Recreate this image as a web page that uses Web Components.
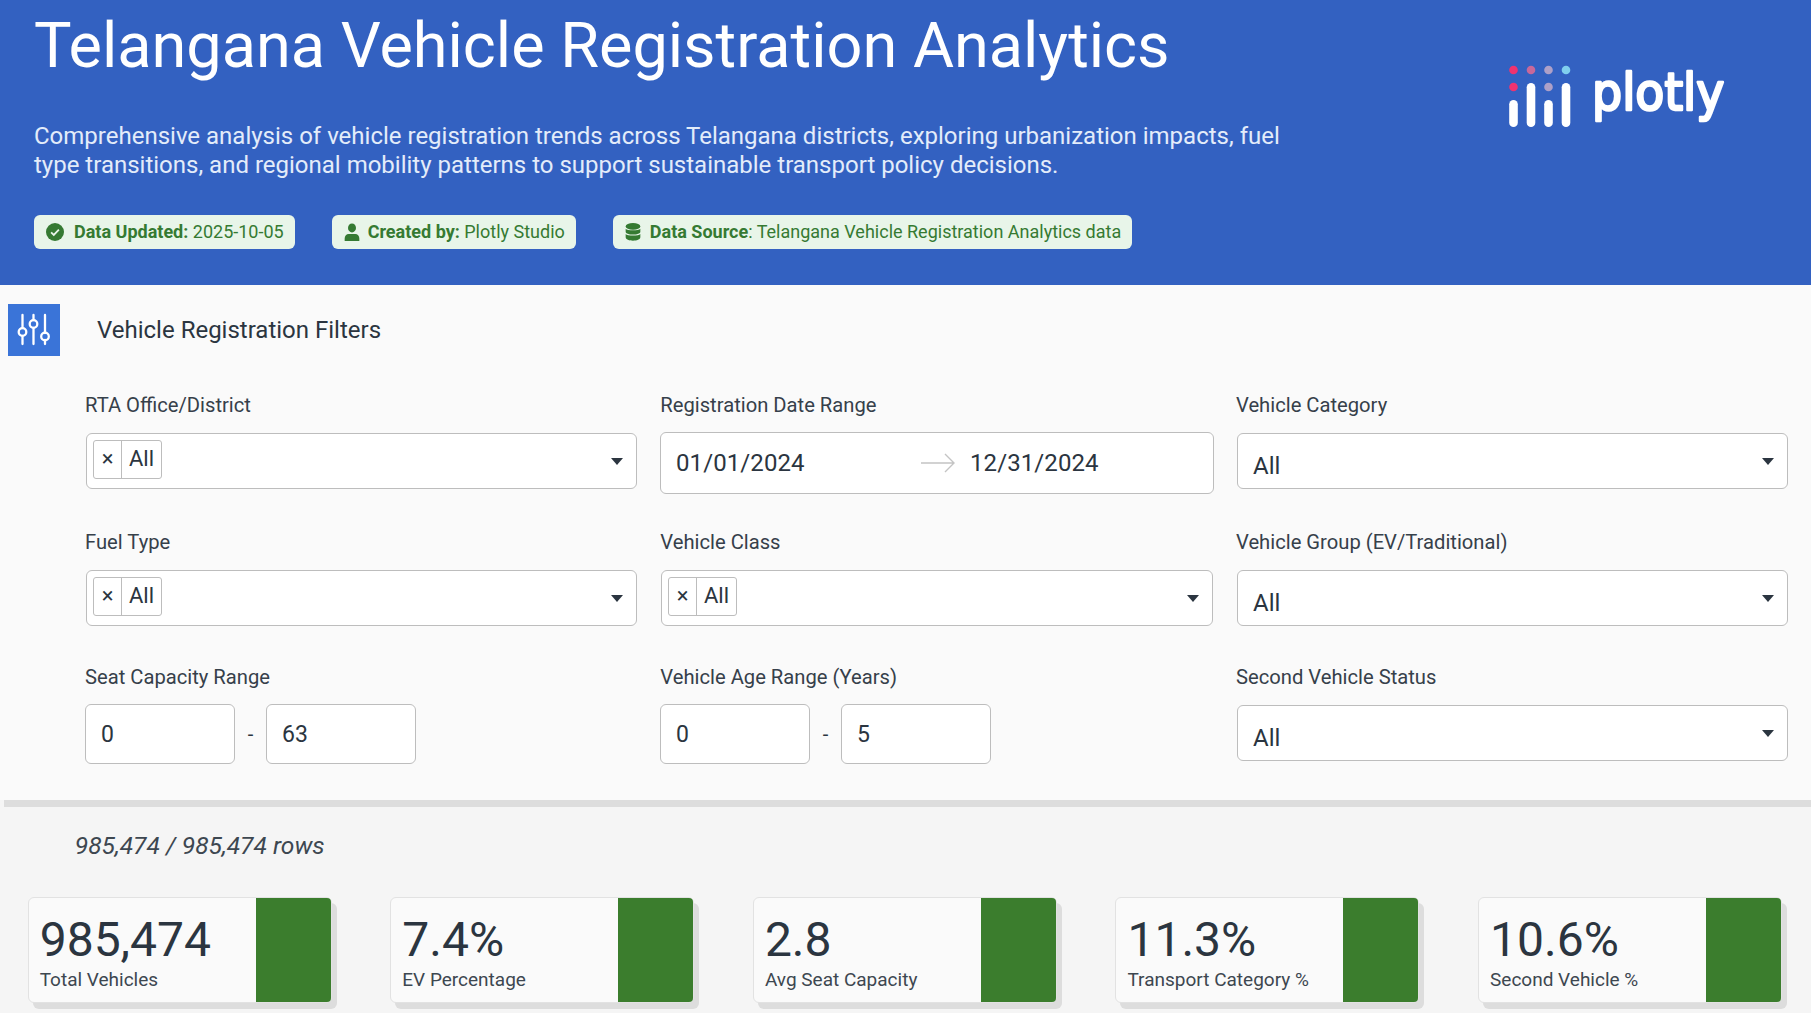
<!DOCTYPE html>
<html lang="en">
<head>
<meta charset="utf-8">
<title>Telangana Vehicle Registration Analytics</title>
<style>
  html, body { margin: 0; height: 100%; overflow: hidden; background: #f5f5f5; }
  body { font-family: Roboto, "Liberation Sans", sans-serif; color: #2b3540; }
</style>
</head>
<body>

<app-header>
  <status-badge icon="check"><b>Data Updated:</b> 2025-10-05</status-badge>
  <status-badge icon="user"><b>Created by:</b> Plotly Studio</status-badge>
  <status-badge icon="database"><b>Data Source</b>: Telangana Vehicle Registration Analytics data</status-badge>
</app-header>

<filter-panel>
  <filter-field label="RTA Office/District"><multi-select></multi-select></filter-field>
  <filter-field label="Registration Date Range"><date-range start="01/01/2024" end="12/31/2024"></date-range></filter-field>
  <filter-field label="Vehicle Category" class="c3"><single-select></single-select></filter-field>
  <filter-field label="Fuel Type"><multi-select></multi-select></filter-field>
  <filter-field label="Vehicle Class" class="c2"><multi-select></multi-select></filter-field>
  <filter-field label="Vehicle Group (EV/Traditional)" class="c3"><single-select></single-select></filter-field>
  <filter-field label="Seat Capacity Range"><number-range min="0" max="63"></number-range></filter-field>
  <filter-field label="Vehicle Age Range (Years)"><number-range min="0" max="5"></number-range></filter-field>
  <filter-field label="Second Vehicle Status" class="c3"><single-select></single-select></filter-field>
</filter-panel>

<kpi-section>
  <span slot="count">985,474 / 985,474 rows</span>
  <kpi-card value="985,474" label="Total Vehicles"></kpi-card>
  <kpi-card value="7.4%" label="EV Percentage"></kpi-card>
  <kpi-card value="2.8" label="Avg Seat Capacity"></kpi-card>
  <kpi-card value="11.3%" label="Transport Category %"></kpi-card>
  <kpi-card value="10.6%" label="Second Vehicle %"></kpi-card>
</kpi-section>

<script>
  const ICONS = {
    check: `<svg viewBox="0 0 24 24" width="18" height="18" style="margin-right:1px"><circle cx="12" cy="12" r="12" fill="currentColor"/><path d="M6.800 12.400l3.600 3.500 6.800-7" fill="none" stroke="#e8f5e9" stroke-width="2.400"/></svg>`,
    user: `<svg viewBox="0 0 24 24" width="16" height="18" preserveAspectRatio="none" style="margin-right:-1px" fill="currentColor"><circle cx="12" cy="6.500" r="6"/><path d="M7 14.500h10a6 6 0 0 1 6 6V24H1v-3.500a6 6 0 0 1 6-6z"/></svg>`,
    database: `<svg viewBox="0 0 24 24" width="16" height="18" preserveAspectRatio="none" fill="currentColor"><ellipse cx="12" cy="4.500" rx="11" ry="4.500"/><path d="M1 7.500c2 3 20 3 22 0v4c0 5-22 5-22 0z"/><path d="M1 14.500c2 3 20 3 22 0v4.500c0 6-22 6-22 0z"/></svg>`
  };

  class AppHeader extends HTMLElement {
    constructor() {
      super();
      this.attachShadow({ mode: 'open' });
      this.shadowRoot.innerHTML = `
        <style>
          :host { display: flex; justify-content: space-between; height: 285px; background: #3361c1; color: #fff; padding-left: 34px; box-sizing: border-box; }
          h1 { margin: 0; padding-top: 8px; font-size: 63px; line-height: 76px; font-weight: 400; white-space: nowrap; }
          p { margin: 38px 0 0; width: 1270px; font-size: 24px; line-height: 29px; color: #e3ecfa; }
          .badges { display: flex; gap: 37px; margin-top: 35px; }
          .logo { margin: 54px 62px 0 0; flex: none; }
        </style>
        <div>
          <h1>Telangana Vehicle Registration Analytics</h1>
          <p>Comprehensive analysis of vehicle registration trends across Telangana districts, exploring urbanization impacts, fuel type transitions, and regional mobility patterns to support sustainable transport policy decisions.</p>
          <div class="badges"><slot></slot></div>
        </div>
        <svg class="logo" width="240" height="90" viewBox="0 -10 240 90">
          <g fill="#f0336f"><circle cx="4.500" cy="6" r="4.300"/><circle cx="4.500" cy="23" r="4.300"/></g>
          <circle cx="22" cy="6" r="4.300" fill="#c8689a"/>
          <g fill="#aea0c8"><circle cx="39.500" cy="6" r="4.300"/><circle cx="39.500" cy="23" r="4.300"/></g>
          <circle cx="57" cy="6" r="4.300" fill="#80cfee"/>
          <g fill="#fff">
            <rect x="0.200" y="36" width="8.600" height="27" rx="4.300"/>
            <rect x="17.700" y="19" width="8.600" height="44" rx="4.300"/>
            <rect x="35.200" y="36" width="8.600" height="27" rx="4.300"/>
            <rect x="52.700" y="19" width="8.600" height="44" rx="4.300"/>
          </g>
          <text transform="translate(83 46) scale(1 1.08)" font-family="DejaVu Sans, sans-serif" font-size="47.500" fill="#fff" stroke="#fff" stroke-width="2.400" stroke-linejoin="round">plotly</text>
        </svg>`;
    }
  }

  class StatusBadge extends HTMLElement {
    constructor() {
      super();
      this.attachShadow({ mode: 'open' });
      this.shadowRoot.innerHTML = `
        <style>
          :host { display: inline-flex; align-items: center; gap: 9px; height: 34px; padding: 0 11px 0 12px; box-sizing: border-box; background: #e8f5e9; color: #357a32; border-radius: 6px; font-size: 18px; white-space: nowrap; }
          ::slotted(b) { font-weight: 700; }
          span { display: flex; }
          div { padding-bottom: 2px; }
        </style>
        <span id="icon"></span><div><slot></slot></div>`;
    }
    connectedCallback() {
      this.shadowRoot.getElementById('icon').innerHTML = ICONS[this.getAttribute('icon')];
    }
  }

  class FilterPanel extends HTMLElement {
    constructor() {
      super();
      this.attachShadow({ mode: 'open' });
      this.shadowRoot.innerHTML = `
        <style>
          :host { display: block; height: 515px; box-sizing: border-box; background: #fafafa; box-shadow: 4px 7px 0 #dddddd; padding: 19px 0 0 8px; }
          .head { display: flex; align-items: center; gap: 37px; font-size: 24px; }
          .icon { width: 52px; height: 52px; background: #3a74d8; display: flex; align-items: center; justify-content: center; }
          .grid { display: grid; grid-template-columns: repeat(3, 555px); column-gap: 20px; padding: 35px 0 0 77px; }
        </style>
        <div class="head">
          <div class="icon">
            <svg width="36" height="36" viewBox="0 0 36 36" fill="none" stroke="#fff" stroke-width="2.300" stroke-linecap="round">
              <path d="M6.500 3v13M6.500 24v8M17.500 3v5M17.500 16v16M29 3v18M29 28v4"/>
              <circle cx="6.500" cy="20" r="3.800"/><circle cx="17.500" cy="12" r="3.800"/><circle cx="29" cy="24.500" r="3.800"/>
            </svg>
          </div>
          <span>Vehicle Registration Filters</span>
        </div>
        <div class="grid"><slot></slot></div>`;
    }
  }

  class FilterField extends HTMLElement {
    constructor() {
      super();
      this.attachShadow({ mode: 'open' });
      this.shadowRoot.innerHTML = `
        <style>
          :host { display: block; height: 137px; }
          :host(:nth-of-type(n+4)) { height: 135px; }
          :host(:nth-of-type(3n+2)) label { padding-left: .3px; }
          :host(:nth-of-type(3n)) label { padding-left: 1px; }
          label { display: block; height: 28px; line-height: 28px; font-size: 20.200px; margin-bottom: 14px; white-space: nowrap; color: #36404a; }
        </style>
        <label></label><slot></slot>`;
    }
    connectedCallback() {
      this.shadowRoot.querySelector('label').textContent = this.getAttribute('label');
    }
  }

  const boxStyle = `
    :host { display: flex; align-items: center; height: 56px; box-sizing: border-box; border: 1px solid #bdbdbd; border-radius: 6px; background: #fff; position: relative; font-size: 22px; }
    .arrow { margin-left: auto; margin-right: 13px; width: 0; height: 0; border-left: 6.500px solid transparent; border-right: 6.500px solid transparent; border-top: 7px solid #2b3540; }`;

  class MultiSelect extends HTMLElement {
    constructor() {
      super();
      this.attachShadow({ mode: 'open' });
      this.shadowRoot.innerHTML = `
        <style>${boxStyle}
          :host { margin: 0 3px 0 1px; }
          :host-context(.c2) { margin: 0 2px 0 1px; }
          .chip { display: flex; align-items: stretch; height: 39px; margin: -3px 0 0 6px; box-sizing: border-box; border: 1px solid #bdbdbd; border-radius: 3px; }
          .x { width: 28px; border-right: 1px solid #bdbdbd; display: flex; align-items: center; justify-content: center; font-size: 22px; padding-bottom: 3px; box-sizing: border-box; }
          .v { padding: 0 7px; line-height: 36px; }
          .arrow { margin-top: 1px; }
        </style>
        <div class="chip"><div class="x">×</div><div class="v">All</div></div><div class="arrow"></div>`;
    }
  }

  class SingleSelect extends HTMLElement {
    constructor() {
      super();
      this.attachShadow({ mode: 'open' });
      this.shadowRoot.innerHTML = `
        <style>${boxStyle}
          :host { margin: 0 2px; font-size: 24px; padding-left: 15px; }
          .v { padding-top: 10px; }
          .arrow { margin-top: 0; }
        </style>
        <div class="v">All</div><div class="arrow"></div>`;
    }
  }

  class DateRange extends HTMLElement {
    constructor() {
      super();
      this.attachShadow({ mode: 'open' });
      this.shadowRoot.innerHTML = `
        <style>${boxStyle}
          :host { height: 62px; margin: -1px 1px 0 0; font-size: 24px; letter-spacing: .1px; padding-left: 15px; }
          .a { width: 245px; } svg { flex: none; margin-right: 15px; }
        </style>
        <div class="a" id="s"></div>
        <svg width="34" height="20" viewBox="0 0 34 20" fill="none" stroke="#c4c4c4" stroke-width="1.400"><path d="M0 10h33M24 1l9 9-9 9"/></svg>
        <div id="e"></div>`;
    }
    connectedCallback() {
      this.shadowRoot.getElementById('s').textContent = this.getAttribute('start');
      this.shadowRoot.getElementById('e').textContent = this.getAttribute('end');
    }
  }

  class NumberRange extends HTMLElement {
    constructor() {
      super();
      this.attachShadow({ mode: 'open' });
      this.shadowRoot.innerHTML = `
        <style>
          :host { display: flex; align-items: center; font-size: 23px; margin-top: -1px; }
          .n { width: 150px; height: 60px; box-sizing: border-box; border: 1px solid #bdbdbd; border-radius: 6px; background: #fff; padding-left: 15px; line-height: 60px; }
          .d { width: 31px; text-align: center; font-size: 20px; }
        </style>
        <div class="n" id="a"></div><div class="d">-</div><div class="n" id="b"></div>`;
    }
    connectedCallback() {
      this.shadowRoot.getElementById('a').textContent = this.getAttribute('min');
      this.shadowRoot.getElementById('b').textContent = this.getAttribute('max');
    }
  }

  class KpiSection extends HTMLElement {
    constructor() {
      super();
      this.attachShadow({ mode: 'open' });
      this.shadowRoot.innerHTML = `
        <style>
          :host { display: block; padding: 31px 0 0 27.700px; }
          .count { display: block; margin-left: 47.100px; height: 30px; line-height: 30px; font-size: 24.600px; font-style: italic; color: #3d4750; }
          .row { display: flex; gap: 58.600px; margin-top: 36px; }
        </style>
        <div class="count"><slot name="count"></slot></div>
        <div class="row"><slot></slot></div>`;
    }
  }

  class KpiCard extends HTMLElement {
    constructor() {
      super();
      this.attachShadow({ mode: 'open' });
      this.shadowRoot.innerHTML = `
        <style>
          :host { display: flex; width: 304px; height: 106px; box-sizing: border-box; background: #fafafa; border: 1px solid #e2e2e2; border-radius: 6px; box-shadow: 5px 6px 0 #dddddd; }
          .t { flex: 1; padding: 15px 0 0 11px; }
          .v { font-size: 48px; line-height: 54px; font-weight: 400; white-space: nowrap; }
          .l { font-size: 19px; line-height: 26px; white-space: nowrap; color: #3d4750; }
          .g { width: 75px; background: #3b7d2d; border-radius: 0 4px 4px 0; }
        </style>
        <div class="t"><div class="v"></div><div class="l"></div></div><div class="g"></div>`;
    }
    connectedCallback() {
      this.shadowRoot.querySelector('.v').textContent = this.getAttribute('value');
      this.shadowRoot.querySelector('.l').textContent = this.getAttribute('label');
    }
  }

  customElements.define('app-header', AppHeader);
  customElements.define('status-badge', StatusBadge);
  customElements.define('filter-panel', FilterPanel);
  customElements.define('filter-field', FilterField);
  customElements.define('multi-select', MultiSelect);
  customElements.define('single-select', SingleSelect);
  customElements.define('date-range', DateRange);
  customElements.define('number-range', NumberRange);
  customElements.define('kpi-section', KpiSection);
  customElements.define('kpi-card', KpiCard);
</script>
</body>
</html>
